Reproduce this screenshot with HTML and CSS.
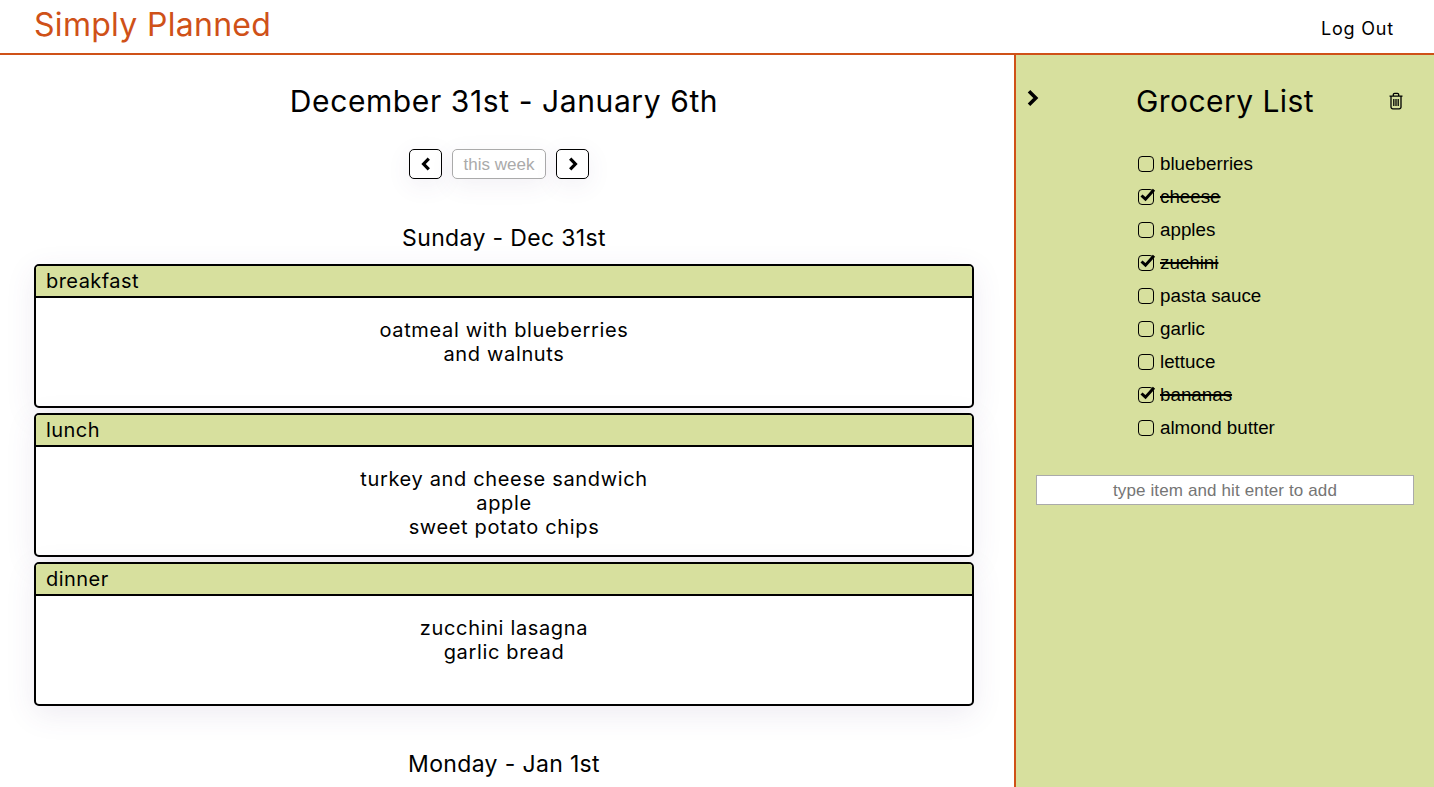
FILE: index.html
```html
<!DOCTYPE html>
<html lang="en">
<head>
<meta charset="utf-8">
<title>Simply Planned</title>
<link rel="stylesheet" href="styles.css">
</head>
<body>
<header class="topbar">
  <h1 class="brand">Simply Planned</h1>
  <a class="logout">Log Out</a>
</header>
<div class="layout">
  <main class="planner">
    <h2 class="week-title">December 31st - January 6th</h2>
    <div class="week-nav">
      <button class="nav-btn"><svg width="10" height="14" viewBox="0 0 10 14"><path class="chev" d="M7.8 1.6 2.6 7l5.2 5.4"/></svg></button>
      <button class="this-week">this week</button>
      <button class="nav-btn"><svg width="10" height="14" viewBox="0 0 10 14"><path class="chev" d="M2.2 1.6 7.4 7l-5.2 5.4"/></svg></button>
    </div>
    <section class="day">
      <h3 class="day-title">Sunday - Dec 31st</h3>
      <article class="meal">
        <div class="meal-head">breakfast</div>
        <div class="meal-body">oatmeal with blueberries<br>and walnuts</div>
      </article>
      <article class="meal">
        <div class="meal-head">lunch</div>
        <div class="meal-body">turkey and cheese sandwich<br>apple<br>sweet potato chips</div>
      </article>
      <article class="meal">
        <div class="meal-head">dinner</div>
        <div class="meal-body">zucchini lasagna<br>garlic bread</div>
      </article>
    </section>
    <section class="day">
      <h3 class="day-title">Monday - Jan 1st</h3>
    </section>
  </main>
  <aside class="grocery">
    <div class="grocery-head">
      <svg class="collapse" width="14" height="18" viewBox="0 0 14 18"><path class="chev thick" d="M3 2.2 9.8 9 3 15.8"/></svg>
      <h2 class="grocery-title">Grocery List</h2>
      <svg class="trash" width="16" height="18" viewBox="0 0 16 18"><path class="line" d="M1.5 4.2h13M3 4.2V15a1.8 1.8 0 0 0 1.8 1.8h6.4A1.8 1.8 0 0 0 13 15V4.2M5.3 4V2.6a1.3 1.3 0 0 1 1.3-1.3h2.8a1.3 1.3 0 0 1 1.3 1.3V4M5.8 7v7M8 7v7M10.2 7v7"/></svg>
    </div>
    <ul class="items">
      <li class="item"><span class="box"></span>blueberries</li>
      <li class="item done"><span class="box"><svg class="tick" width="19" height="17" viewBox="0 0 19 17"><path d="M3.5 8.5l4 3.7L16 2.8"/></svg></span><span class="label">cheese</span></li>
      <li class="item"><span class="box"></span>apples</li>
      <li class="item done"><span class="box"><svg class="tick" width="19" height="17" viewBox="0 0 19 17"><path d="M3.5 8.5l4 3.7L16 2.8"/></svg></span><span class="label">zuchini</span></li>
      <li class="item"><span class="box"></span>pasta sauce</li>
      <li class="item"><span class="box"></span>garlic</li>
      <li class="item"><span class="box"></span>lettuce</li>
      <li class="item done"><span class="box"><svg class="tick" width="19" height="17" viewBox="0 0 19 17"><path d="M3.5 8.5l4 3.7L16 2.8"/></svg></span><span class="label">bananas</span></li>
      <li class="item"><span class="box"></span>almond butter</li>
    </ul>
    <input class="add-item" type="text" placeholder="type item and hit enter to add">
  </aside>
</div>
</body>
</html>
```
FILE: styles.css
```css
* { box-sizing: border-box; }
html, body { margin: 0; height: 100%; overflow: hidden; }
body { font-family: Inter, "Liberation Sans", sans-serif; color: #000; background: #fff; }

.topbar {
  height: 55px;
  border-bottom: 2px solid #cf5118;
  display: flex;
  justify-content: space-between;
  align-items: flex-start;
  padding: 0 40px 0 34px;
}
.brand { margin: 5px 0 0; font-size: 32px; line-height: 40px; font-weight: 400; letter-spacing: .3px; color: #cf5118; }
.logout { margin-top: 18px; font-size: 18px; line-height: 22px; letter-spacing: .8px; }

.layout { display: flex; height: 732px; }
.planner { width: 1014px; padding: 0 40px 0 34px; overflow: hidden; flex: none; }
.week-title { margin: 26px 0 0; text-align: center; font-size: 30px; line-height: 40px; font-weight: 400; letter-spacing: .6px; }

.week-nav { display: flex; justify-content: center; gap: 10px; margin: 28px 10px 0 0; height: 30px; }
.nav-btn, .this-week {
  height: 30px;
  padding: 0;
  border-radius: 5px;
  background: #fff;
  box-shadow: 0 6px 24px rgba(90, 60, 130, .08);
  display: flex;
  align-items: center;
  justify-content: center;
}
.nav-btn { width: 33px; border: 1.5px solid #000; }
.this-week { width: 94px; border: 1px solid #aaa; color: #aaa; font: 17px/1 "Liberation Sans", sans-serif; }
.chev { fill: none; stroke: #000; stroke-width: 3.2; }
.chev.thick { stroke-width: 3.6; }

.day { margin-top: 44px; }
.day + .day { margin-top: 43px; }
.day-title { margin: 0 0 11px; text-align: center; font-size: 23px; line-height: 30px; font-weight: 400; letter-spacing: .35px; }

.meal {
  height: 144px;
  margin-bottom: 5px;
  border: 2px solid #000;
  border-radius: 5px;
  background: #fff;
  box-shadow: 0 8px 30px rgba(90, 60, 130, .1);
  overflow: hidden;
}
.meal-head {
  height: 32px;
  padding-left: 10px;
  background: #d7e09e;
  border-bottom: 2px solid #000;
  font-size: 20px;
  line-height: 31px;
  letter-spacing: .45px;
}
.meal-body { padding-top: 20px; text-align: center; font-size: 20px; line-height: 24px; letter-spacing: .65px; }

.grocery {
  flex: 1;
  background: #d7e09e;
  border-left: 2px solid #cf5118;
  padding: 0 20px;
}
.grocery-head { position: relative; height: 40px; margin-top: 26px; text-align: center; }
.grocery-title { margin: 0; font-size: 30px; line-height: 40px; font-weight: 400; letter-spacing: .45px; }
.collapse { position: absolute; left: -10px; top: 8px; }
.trash { position: absolute; right: 10px; top: 11px; }
.line { fill: none; stroke: #000; stroke-width: 1.3; }

.items { list-style: none; margin: 26px 0 0; padding: 0 0 0 102px; }
.item {
  display: flex;
  align-items: center;
  height: 33px;
  font-family: "Liberation Sans", sans-serif;
  font-size: 18.8px;
}
.box {
  position: relative;
  flex: none;
  width: 16px;
  height: 16px;
  margin-right: 6px;
  border: 1.5px solid #000;
  border-radius: 4px;
}
.tick { position: absolute; left: -1.5px; top: -3px; fill: none; stroke: #000; stroke-width: 3; }
.done .label { text-decoration: line-through; text-decoration-thickness: 2px; }

.add-item {
  display: block;
  width: 378px;
  height: 30px;
  margin-top: 31px;
  border: 1px solid #aaa;
  background: #fff;
  padding: 2px 0 0;
  text-align: center;
  font-family: "Liberation Sans", sans-serif;
  font-size: 17px;
  letter-spacing: .13px;
}
.add-item::placeholder { color: #757575; opacity: 1; }
```
